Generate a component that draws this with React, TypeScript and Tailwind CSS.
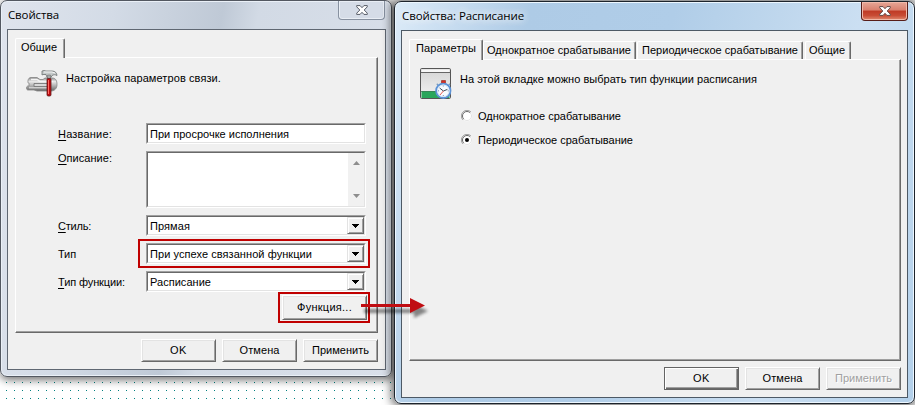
import { useLayoutEffect, useRef } from "react";
import type { ReactNode } from "react";

/** A single line of text whose tracking is computed so that it fills a given width. */
function Fit({ w, className = "", children }: { w: number; className?: string; children: ReactNode }) {
  const ref = useRef<HTMLSpanElement>(null);
  useLayoutEffect(() => {
    const el = ref.current;
    if (!el) return;
    el.style.letterSpacing = "0px";
    const natural = el.getBoundingClientRect().width;
    const count = (el.textContent ?? "").length;
    el.style.letterSpacing = `${(w - natural) / count}px`;
  }, [w]);
  return (
    <span ref={ref} className={`inline-block whitespace-nowrap ${className}`}>
      {children}
    </span>
  );
}

function Sunken({ className = "", children }: { className?: string; children?: ReactNode }) {
  return (
    <div className="-mt-px w-[220px] shrink-0 self-start border border-t-[#a0a0a0] border-l-[#a0a0a0] border-r-white border-b-white">
      <div className={`flex border border-t-[#696969] border-l-[#696969] border-r-[#e3e3e3] border-b-[#e3e3e3] bg-white ${className}`}>
        {children}
      </div>
    </div>
  );
}

function Combo({ text, w }: { text: string; w: number }) {
  return (
    <Sunken className="h-[19px] items-center justify-between pl-[2px]">
      <Fit w={w}>{text}</Fit>
      <div className="flex h-[17px] w-[17px] items-center justify-center border border-t-[#e3e3e3] border-l-[#e3e3e3] border-r-[#696969] border-b-[#696969] bg-[#f0f0f0] shadow-[inset_1px_1px_0_#fff,inset_-1px_-1px_0_#a0a0a0]">
        <svg width="7" height="4" viewBox="0 0 7 4" shapeRendering="crispEdges">
          <path d="M0 0h7v1H6v1H5v1H4v1H3V3H2V2H1V1H0z" fill="#000" />
        </svg>
      </div>
    </Sunken>
  );
}

function Button({ text, w, isDefault = false, disabled = false }: { text: string; w: number; isDefault?: boolean; disabled?: boolean }) {
  return (
    <div
      className={`flex h-[23px] w-[75px] items-center justify-center border bg-[#f0f0f0] pb-px ${
        isDefault
          ? "border-[#646464] shadow-[inset_1px_1px_0_#fff,inset_-1px_-1px_0_#696969,inset_-2px_-2px_0_#a0a0a0]"
          : "border-t-white border-l-white border-r-[#696969] border-b-[#696969] shadow-[inset_1px_1px_0_#e3e3e3,inset_-1px_-1px_0_#a0a0a0]"
      } ${disabled ? "text-[#a0a0a0] [text-shadow:1px_1px_0_#fff]" : ""}`}
    >
      <Fit w={w}>{text}</Fit>
    </div>
  );
}

function CloseGlyph({ dark }: { dark: string }) {
  return (
    <svg width="12" height="10" viewBox="0 0 12 10">
      <path d="M.7.6h3.4L6 2.7 7.9.6h3.4v1.2L8.2 5l3.1 3.2v1.2H7.9L6 7.3 4.1 9.4H.7V8.2L3.8 5 .7 1.8z" fill="#fff" stroke={dark} strokeWidth="1" />
    </svg>
  );
}

function Tab({ text, w, className }: { text: string; w: number; className: string }) {
  return (
    <div className={`flex shrink-0 rounded-t-[2px] border-t border-l border-r border-t-white border-l-white border-r-[#696969] bg-[#f0f0f0] shadow-[inset_-1px_0_0_#a0a0a0] ${className}`}>
      <Fit w={w}>{text}</Fit>
    </div>
  );
}

function WrenchIcon() {
  return (
    <svg width="33" height="28" viewBox="0 0 33 28" className="shrink-0">
      <defs>
        <linearGradient id="steel" x1="0" y1="0" x2="0" y2="1">
          <stop offset="0" stopColor="#8b8b8b" />
          <stop offset=".3" stopColor="#e8e8e8" />
          <stop offset=".6" stopColor="#b3b3b3" />
          <stop offset="1" stopColor="#686868" />
        </linearGradient>
      </defs>
      <path d="M5 7.5h6l3 2h3l2-1.5h7c4 0 5 3 5 6.500s-2 6.500-6 6.500H11l-3-1H2c-1 0-1.500-1-1.500-2s.5-2 1.500-2h1v-3H2.500c-1 0-1-5.500 2.500-5.500z" fill="url(#steel)" stroke="#858585" strokeWidth=".8" />
      <path d="M5 9.500h6l3 2h13" fill="none" stroke="#f4f4f4" strokeWidth="1.4" />
      <path d="M8 13.500h15c2 0 2 3 0 3H8z" fill="#d8d8d8" stroke="#777" strokeWidth=".9" />
      <path d="M3 17.800h20" fill="none" stroke="#e6e6e6" strokeWidth="1" />
      <g transform="translate(-1 -1)">
        <path d="M17 2l2-.5 2 .5h6c3 0 5 2 5 4.500-2-1-3-1-5 0l-1 2h-4l-1-3h-3l-1 .5z" fill="#c5caca" stroke="#6b7070" strokeWidth=".8" />
        <path d="M19 3h8l3 1" fill="none" stroke="#f4f4f4" strokeWidth="1" />
        <path d="M22.500 6h3v4h-3z" fill="#a4a8a8" stroke="#666" strokeWidth=".5" />
        <rect x="22" y="9.500" width="4" height="17.500" rx="1.200" fill="#c00b10" stroke="#591c1d" strokeWidth=".8" />
        <path d="M23.500 11v14" stroke="#ff6b63" strokeWidth="1" />
      </g>
    </svg>
  );
}

function ScheduleIcon() {
  return (
    <svg width="32" height="32" viewBox="0 0 32 32" className="shrink-0">
      <defs>
        <linearGradient id="sheet" x1="0" y1="0" x2="0" y2="1">
          <stop offset="0" stopColor="#d4d4d4" />
          <stop offset="1" stopColor="#f4f4f4" />
        </linearGradient>
      </defs>
      <rect x=".5" y=".5" width="30" height="30" rx="1.2" fill="url(#sheet)" stroke="#555" />
      <path d="M1.5 1.5h28v2.5h-28z" fill="#f7f7f7" />
      <path d="M1 4.5h29" stroke="#666" />
      <path d="M1.5 23h28v7h-28z" fill="#2aa65b" />
      <path d="M1 23.5h29" stroke="#3e7855" strokeWidth=".7" />
      <path d="M21.5 12.5h4v3h-4z" fill="#d52b20" stroke="#8d2418" strokeWidth=".6" />
      <path d="M16.8 15.8l1.6 1.8M30 15.8l-1.6 1.8" stroke="#7d9cbd" strokeWidth="1.3" />
      <circle cx="23.3" cy="22.8" r="7.2" fill="#f7fbff" stroke="#5b92d6" strokeWidth="1.8" />
      <circle cx="23.3" cy="22.8" r="5.8" fill="none" stroke="#c7daf0" strokeWidth=".7" />
      <path d="M19.6 20l3.8 3 4-1.6" fill="none" stroke="#414b59" strokeWidth="1" />
      <path d="M23.4 23l-3.4 4" stroke="#e4483b" strokeWidth=".9" />
      <path d="M23.3 17.5v1M23.3 27v1M18 22.8h1M27.7 22.8h1" stroke="#63779b" strokeWidth=".8" />
    </svg>
  );
}

function FieldLabel({ hot = "", rest, w }: { hot?: string; rest: string; w: number }) {
  return (
    <div className="flex h-5 w-[88px] shrink-0 items-center">
      <Fit w={w}>
        {hot && <span className="underline underline-offset-2">{hot}</span>}
        {rest}
      </Fit>
    </div>
  );
}

function LinkWindow() {
  return (
    <section className="absolute top-0 left-0 flex h-[377px] w-[392px] flex-col rounded-[7px] border border-[#535861] bg-[linear-gradient(100deg,#dfe4ed_0%,#d3dbe6_25%,#bfc9d6_49%,#d2dae5_57%,#dae0ea_100%)] px-[6px] shadow-[inset_0_0_0_1px_#eaf0f7,1px_2px_9px_1px_#0000008c]">
      <header className="flex h-7 shrink-0 justify-between pl-[1px]">
        <Fit w={51} className="mt-[6px] h-4 font-['Open_Sans','Noto_Sans',sans-serif] text-[11.5px] leading-4">Свойства</Fit>
        <div className="flex h-[19px] w-[47px] items-center justify-center rounded-b-[4px] border border-t-0 border-[#8791a0] bg-[#d5dce7] pb-[1px] shadow-[inset_0_0_0_1px_#e9eef5]">
          <CloseGlyph dark="#555b66" />
        </div>
      </header>
      <div className="flex h-[341px] w-[379px] shrink-0 flex-col border border-[#5f6772] bg-[#f0f0f0] px-[7px]">
        <div className="mt-[8px] flex h-[20px] shrink-0">
          <Tab text="Общие" w={36} className="z-10 -mb-px h-[20px] w-[50px] pt-[1px] pl-[5px]" />
        </div>
        <div className="-mt-px flex h-[276px] w-[363px] shrink-0 flex-col border border-t-white border-l-white border-r-[#696969] border-b-[#696969] shadow-[inset_-1px_-1px_0_#a0a0a0]">
          <div className="flex h-[66px] shrink-0 pt-[12px] pl-[10px]">
            <WrenchIcon />
            <Fit w={155} className="mt-[1px] ml-[7px]">Настройка параметров связи.</Fit>
          </div>
          <div className="flex h-7 shrink-0 pl-[42px]">
            <FieldLabel hot="Н" rest="азвание:" w={54} />
            <Sunken className="h-[19px] items-center pl-[2px]"><Fit w={139}>При просрочке исполнения</Fit></Sunken>
          </div>
          <div className="flex h-[64px] shrink-0 pl-[42px]">
            <div className="-mt-1"><FieldLabel hot="О" rest="писание:" w={54} /></div>
            <Sunken className="h-[55px] justify-end">
              <div className="flex w-4 flex-col items-center justify-between bg-[#f1f1f1] py-[8px]">
                <svg width="7" height="4"><path d="M3.5 0L7 4H0z" fill="#8d8d8d" /></svg>
                <svg width="7" height="4"><path d="M0 0h7L3.5 4z" fill="#8d8d8d" /></svg>
              </div>
            </Sunken>
          </div>
          <div className="flex h-7 shrink-0 pl-[42px]"><FieldLabel hot="С" rest="тиль:" w={33} /><Combo text="Прямая" w={40} /></div>
          <div className="flex h-7 shrink-0 pl-[42px]">
            <FieldLabel rest="Тип" w={18} />
            <div className="-mt-[5px] -ml-2 h-[29px] w-[232px] shrink-0 border-2 border-[#c00000] pt-[3px] pl-[6px]"><Combo text="При успехе связанной функции" w={162} /></div>
          </div>
          <div className="flex h-5 shrink-0 pl-[42px]"><FieldLabel hot="Т" rest="ип функции:" w={67} /><Combo text="Расписание" w={61} /></div>
          <div className="ml-[262px] h-[31px] w-[92px] shrink-0 border-2 border-[#c00000] pt-[1px] pl-[2px]">
            <div className="flex h-[25px] w-[85px] items-center justify-center border border-t-white border-l-white border-r-[#696969] border-b-[#696969] pb-px shadow-[inset_1px_1px_0_#e3e3e3,inset_-1px_-1px_0_#a0a0a0]"><Fit w={55}>Функция...</Fit></div>
          </div>
        </div>
        <footer className="mt-[6px] flex justify-end gap-[6px]">
          <Button text="OK" w={17} />
          <Button text="Отмена" w={40} />
          <Button text="Применить" w={57} />
        </footer>
      </div>
    </section>
  );
}

function Radio({ text, w, checked = false }: { text: string; w: number; checked?: boolean }) {
  return (
    <div className="flex h-6 items-center">
      <svg width="12" height="12" viewBox="0 0 12 12" className="mr-[5px] -mt-px">
        <circle cx="6" cy="6" r="5.2" fill="#fff" />
        <path d="M2 10A5.5 5.5 0 0 1 10 2" fill="none" stroke="#a0a0a0" />
        <path d="M2.8 9.2A4.5 4.5 0 0 1 9.2 2.8" fill="none" stroke="#696969" />
        <path d="M9.2 2.8A4.5 4.5 0 0 1 2.8 9.2" fill="none" stroke="#e3e3e3" />
        {checked && <circle cx="6" cy="6" r="2" fill="#000" />}
      </svg>
      <Fit w={w}>{text}</Fit>
    </div>
  );
}

function ScheduleWindow() {
  return (
    <section className="absolute top-[1px] left-[394px] flex h-[403px] w-[521px] flex-col rounded-[7px] border border-[#1d242c] bg-[linear-gradient(105deg,#dcebf8_0%,#aecbe6_22%,#b0cde8_45%,#bfd7ed_62%,#cbdff2_75%,#b3d0ea_100%)] px-[6px] shadow-[inset_0_0_0_1px_#edf7ff,0_0_10px_3px_#00000090]">
      <header className="flex h-7 shrink-0 justify-between pl-[1px]">
        <Fit w={122} className="mt-[6px] h-4 font-['Open_Sans','Noto_Sans',sans-serif] text-[11.5px] leading-4 [text-shadow:0_0_8px_#fff,0_0_8px_#fff]">Свойства: Расписание</Fit>
        <div className="flex h-[19px] w-[47px] items-center justify-center rounded-b-[4px] border border-t-0 border-[#571d18] bg-[linear-gradient(#e6a797_0%,#d9806e_45%,#bf3a25_50%,#c84c35_75%,#e18b71_100%)] pb-[1px] shadow-[inset_0_0_0_1px_#f0b9aa]">
          <CloseGlyph dark="#624845" />
        </div>
      </header>
      <div className="flex h-[368px] w-[507px] shrink-0 flex-col border border-[#4d5965] bg-[#f0f0f0] pr-[6px] pl-[7px]">
        <div className="mt-[8px] flex h-[21px] shrink-0 items-end">
          <Tab text="Параметры" w={60} className="z-10 h-[21px] w-[74px] pt-[1px] pl-[6px]" />
          <Tab text="Однократное срабатывание" w={144} className="mb-[1px] h-[18px] w-[153px] pt-[1px] pl-[3px]" />
          <Tab text="Периодическое срабатывание" w={156} className="mb-[1px] ml-[1px] h-[18px] w-[166px] pt-[1px] pl-[4px]" />
          <Tab text="Общие" w={36} className="mb-[1px] ml-[2px] h-[18px] w-[46px] pt-[1px] pl-[3px]" />
        </div>
        <div className="-mt-px h-[302px] w-[492px] shrink-0 border border-t-white border-l-white border-r-[#696969] border-b-[#696969] pl-[10px] shadow-[inset_-1px_-1px_0_#a0a0a0]">
          <div className="flex h-[44px] pt-[8px]">
            <ScheduleIcon />
            <Fit w={297} className="mt-[4px] ml-[8px]">На этой вкладке можно выбрать тип функции расписания</Fit>
          </div>
          <div className="pl-[41px]">
            <Radio text="Однократное срабатывание" w={143} />
            <Radio text="Периодическое срабатывание" w={155} checked />
          </div>
        </div>
        <footer className="mt-[6px] flex justify-end gap-[6px]">
          <Button text="OK" w={17} isDefault />
          <Button text="Отмена" w={40} />
          <Button text="Применить" w={57} disabled />
        </footer>
      </div>
    </section>
  );
}

export default function App() {
  return (
    <main className="relative h-[405px] w-[915px] overflow-hidden bg-white font-['Liberation_Sans',Arial,sans-serif] text-[11px] leading-[14px] text-black">
      <svg className="absolute top-[377px] left-0" width="392" height="28">
        <defs>
          <pattern id="grid" x="6" y="5" width="8" height="8" patternUnits="userSpaceOnUse">
            <rect width="1" height="1" fill="#008080" />
          </pattern>
        </defs>
        <rect width="392" height="22" fill="url(#grid)" />
      </svg>
      <LinkWindow />
      <ScheduleWindow />
      <svg className="absolute top-[292px] left-[358px] overflow-visible" width="76" height="34">
        <defs>
          <filter id="soft" x="-20%" y="-80%" width="140%" height="300%">
            <feGaussianBlur stdDeviation="1.8" />
          </filter>
        </defs>
        <path d="M6 17h50v-5l14 7-14 7v-5H6z" fill="#000" opacity=".45" filter="url(#soft)" />
        <path d="M3 12h49V6l15 7.5L52 21v-6H3z" fill="#c00d12" />
      </svg>
    </main>
  );
}
